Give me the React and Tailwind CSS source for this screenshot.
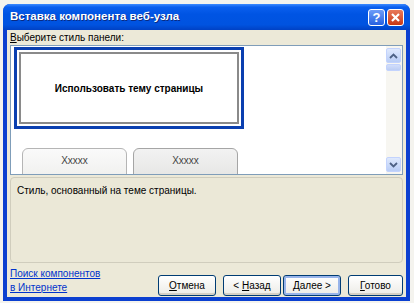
import React from "react";

const Chevron = ({ up }) => (
  <svg width="9" height="6" viewBox="0 0 9 6">
    <path d={up ? "M1 5 L4.5 1.5 L8 5" : "M1 1 L4.5 4.5 L8 1"} fill="none" stroke="#4d6185" strokeWidth="1.8" />
  </svg>
);

const Btn = ({ children, focused, w = "w-[58px]" }) => (
  <div
    className={`${w} h-[21px] rounded-[3px] border border-[#003c74] bg-gradient-to-b from-white to-[#ecebe6] flex items-center justify-center text-[10px] text-black ${
      focused ? "shadow-[inset_0_0_0_2px_#98b4ea]" : "shadow-[inset_0_-2px_0_#d6d0c5]"
    }`}
  >
    {children}
  </div>
);

export default function App() {
  return (
    <div
      className="w-[414px] h-[303px] bg-[#f4f3ee] pt-[4px] pl-[3px] pr-[4px] pb-[2px] overflow-hidden"
      style={{ fontFamily: '"Liberation Sans", "DejaVu Sans", sans-serif' }}
    >
      <div className="h-full flex flex-col rounded-t-[7px] bg-[#0b3fd0] overflow-hidden">
        <div className="h-[26px] shrink-0 flex items-center pl-[7px] pr-[6px] bg-[linear-gradient(180deg,#3d8bff_0%,#0a5fee_12%,#0054e3_40%,#0053e0_80%,#0041c4_100%)]">
          <span
            className="text-white text-[11.5px] font-bold flex-1"
            style={{ textShadow: "1px 1px 0 #0a2a80" }}
          >
            Вставка компонента веб-узла
          </span>
          <div className="flex gap-[2px]">
            <div className="w-[17px] h-[17px] rounded-[3px] border border-white bg-gradient-to-b from-[#6e9cf8] to-[#2660e0] flex items-center justify-center text-white text-[13px] font-bold leading-none">
              ?
            </div>
            <div className="w-[17px] h-[17px] rounded-[3px] border border-white bg-gradient-to-b from-[#e8795a] to-[#c9360f] flex items-center justify-center">
              <svg width="11" height="11" viewBox="0 0 11 11">
                <path d="M2 2 L9 9 M9 2 L2 9" stroke="white" strokeWidth="2.2" />
              </svg>
            </div>
          </div>
        </div>
        <div className="flex-1 mx-[4px] mb-[4px] bg-[#ece9d8] flex flex-col px-[3px] pt-[1px]">
          <div className="text-[10px] leading-[13px] text-black h-[14px]">
            <span className="underline">В</span>ыберите стиль панели:
          </div>
          <div className="h-[130px] border border-[#7f9db9] bg-white flex">
            <div className="flex-1 pl-[3px] pt-[1px] overflow-hidden">
              <div className="w-[230px] h-[82px] border-[3px] border-[#0a3fb0] p-[2px] bg-white">
                <div className="w-full h-full border-[2px] border-[#8a8a8a] flex items-center justify-center text-[10px] font-bold text-black">
                  Использовать тему страницы
                </div>
              </div>
              <div className="flex gap-[6px] pl-[8px] mt-[19px]">
                <div className="w-[105px] h-[30px] rounded-t-[6px] border border-[#b5b5b5] bg-gradient-to-b from-[#fafafa] to-[#f0f0ee] flex justify-center pt-[4px] text-[10px] text-[#444]">
                  Xxxxx
                </div>
                <div className="w-[105px] h-[30px] rounded-t-[6px] border border-[#a5a5a5] bg-gradient-to-b from-[#f2f2f2] to-[#e6e6e4] flex justify-center pt-[4px] text-[10px] text-[#444]">
                  Xxxxx
                </div>
              </div>
            </div>
            <div className="w-[16px] bg-[#f7f6f1] flex flex-col justify-between pt-[2px] pb-[2px] pr-[1px]">
              <div>
                <div className="w-[15px] h-[15px] rounded-[2px] bg-gradient-to-b from-[#dfe9fd] to-[#b9cdf6] border border-[#c3d3fd] flex items-center justify-center">
                  <Chevron up />
                </div>
                <div className="w-[15px] h-[7px] mt-[1px] rounded-[2px] bg-gradient-to-b from-[#d2defa] to-[#bccdf4] border border-[#c3d3fd]" />
              </div>
              <div className="w-[15px] h-[15px] rounded-[2px] bg-gradient-to-b from-[#dfe9fd] to-[#b9cdf6] border border-[#c3d3fd] flex items-center justify-center">
                <Chevron />
              </div>
            </div>
          </div>
          <div className="mt-[2px] h-[86px] rounded-[4px] border border-[#d0cdbd] bg-[#ebe8d7] px-[6px] pt-[5px] text-[10px] text-black">
            Стиль, основанный на теме страницы.
          </div>
          <div className="flex-1 flex items-end justify-between pb-[1px]">
            <div className="text-[10px] leading-[14px] text-[#0033cc] pb-[1px]">
              <div className="underline">Поиск компонентов</div>
              <div className="underline">в Интернете</div>
            </div>
            <div className="flex items-center">
              <Btn>
                <span><span className="underline">О</span>тмена</span>
              </Btn>
              <div className="w-[7px]" />
              <Btn>
                <span>&lt; <span className="underline">Н</span>азад</span>
              </Btn>
              <div className="w-[2px]" />
              <Btn focused>
                <span><span className="underline">Д</span>алее &gt;</span>
              </Btn>
              <div className="w-[7px]" />
              <Btn w="w-[55px]">
                <span><span className="underline">Г</span>отово</span>
              </Btn>
            </div>
          </div>
        </div>
      </div>
    </div>
  );
}
